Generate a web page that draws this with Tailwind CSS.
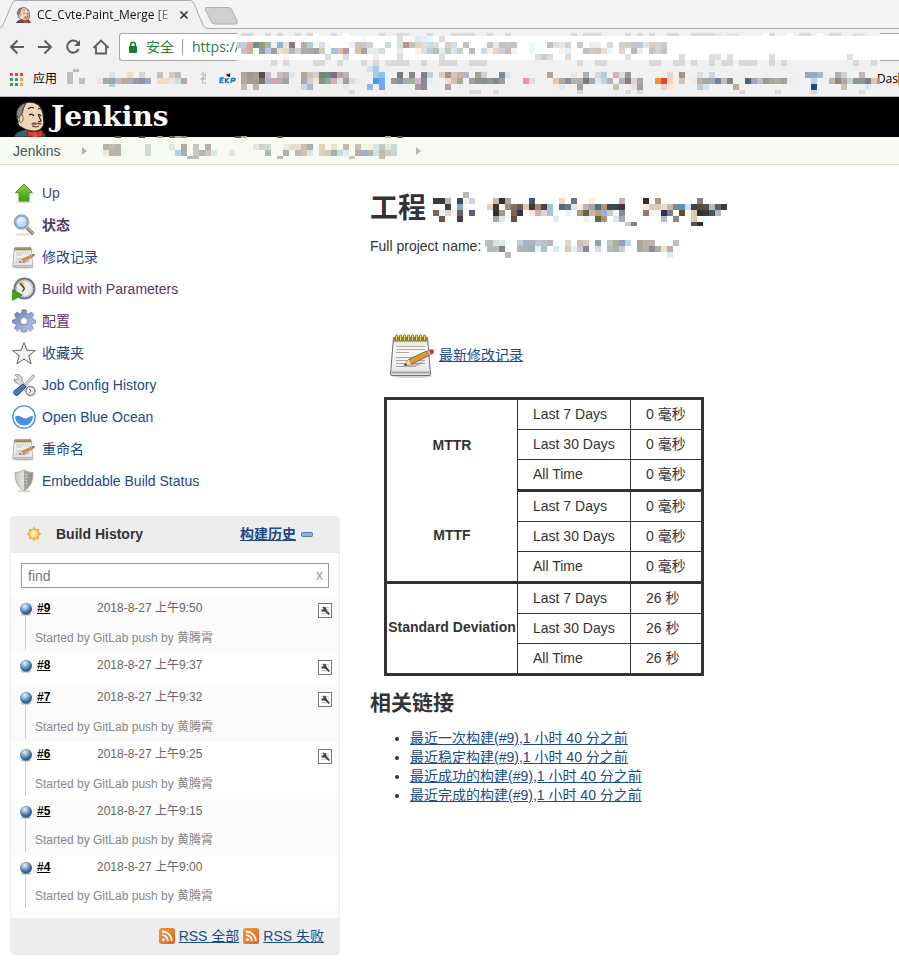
<!DOCTYPE html>
<html lang="zh-CN">
<head>
<meta charset="utf-8">
<title>CC_Cvte.Paint_Merge [Jenkins]</title>
<script src="https://cdn.jsdelivr.net/npm/@tailwindcss/browser@4"></script>
</head>
<body class="bg-white font-['Liberation_Sans','Noto_Sans_CJK_SC',sans-serif] text-sm text-[#333]">

<!-- Shared icon symbols -->
<svg class="absolute size-0" aria-hidden="true">
  <defs>
    <linearGradient id="gPaper" x1="0" y1="0" x2="0" y2="1"><stop offset="0" stop-color="#d8d8d6"/><stop offset=".3" stop-color="#fafafa"/><stop offset="1" stop-color="#e4e4e4"/></linearGradient>
    <linearGradient id="gGreen" x1="0" y1="0" x2="0" y2="1"><stop offset="0" stop-color="#8fd44c"/><stop offset="1" stop-color="#3f9a12"/></linearGradient>
    <linearGradient id="gGear" x1="0" y1="0" x2="1" y2="1"><stop offset="0" stop-color="#5f7fb0"/><stop offset=".5" stop-color="#93a5cc"/><stop offset="1" stop-color="#c3cce6"/></linearGradient>
    <linearGradient id="gShield" x1="0" y1="0" x2="1" y2="0"><stop offset="0" stop-color="#c9c9c5"/><stop offset=".5" stop-color="#e2e2df"/><stop offset=".51" stop-color="#a9a9a5"/><stop offset="1" stop-color="#8b8b87"/></linearGradient>
    <linearGradient id="gRss" x1="0" y1="0" x2="1" y2="1"><stop offset="0" stop-color="#f39a45"/><stop offset="1" stop-color="#dd6320"/></linearGradient>
    <radialGradient id="gBall" cx=".4" cy=".3" r=".65"><stop offset="0" stop-color="#e9f0f0"/><stop offset=".35" stop-color="#a4bcd0"/><stop offset=".75" stop-color="#4077ae"/><stop offset="1" stop-color="#2a568c"/></radialGradient>
    <radialGradient id="gSun" cx=".45" cy=".4" r=".6"><stop offset="0" stop-color="#fffbc0"/><stop offset="1" stop-color="#fbd060"/></radialGradient>
    <radialGradient id="gLens" cx=".4" cy=".3" r=".7"><stop offset="0" stop-color="#eef6fd"/><stop offset="1" stop-color="#a9cbec"/></radialGradient>
    <symbol id="notepad" viewBox="0 0 48 48">
      <ellipse cx="23" cy="45" rx="20" ry="2" fill="#000" opacity=".18"/>
      <path d="M4.500 6.500h34l3 36.500q0 1.500-1.500 1.500H3q-1.500 0-1.500-1.500z" fill="url(#gPaper)" stroke="#6f706d"/>
      <path d="M5 6.500h33l.4 4H4.600z" fill="#85857c"/>
      <path d="M2.500 41.500h38" stroke="#a0a4a0" stroke-width="2"/>
      <path d="M7 15.500h29M7 18.500h29M7 21.500h13M7 26.500h29M7 29.500h29M7 32.500h29M7 35.500h20" stroke="#a9a9a7"/>
      <g fill="#f0d84a" stroke="#7d6910" stroke-width=".9"><rect x="6.500" y="4" width="2.200" height="6" rx="1"/><rect x="10.500" y="4" width="2.200" height="6" rx="1"/><rect x="14.500" y="4" width="2.200" height="6" rx="1"/><rect x="18.500" y="4" width="2.200" height="6" rx="1"/><rect x="22.500" y="4" width="2.200" height="6" rx="1"/><rect x="26.500" y="4" width="2.200" height="6" rx="1"/><rect x="30.500" y="4" width="2.200" height="6" rx="1"/><rect x="34.500" y="4" width="2.200" height="6" rx="1"/></g>
      <path d="M15 35l21-5-7 5z" fill="#777" opacity=".4"/>
      <path d="M15 34.500l4.500-6 18-8.500 2.500 4.500-18 9z" fill="#d99a3c" stroke="#7b4a12" stroke-width=".8"/>
      <path d="M15 34.500l4.500-6 2.500 5z" fill="#f2dcb4"/><path d="M15 34.500l2-2.600 1 2z" fill="#222"/>
      <path d="M37.500 20l2.500-1.200 2.500 4.500L40 24.500z" fill="#bbb" stroke="#777" stroke-width=".5"/>
      <path d="M40 18.700q5-1.500 5 1.500t-3 3.200z" fill="#e02c2c"/>
    </symbol>
    <symbol id="jenkins" viewBox="0 0 34 36">
      <path d="M1 36q1-5 10-7l14 0q7 2 8 7z" fill="#3d6173" stroke="#1c2c35"/>
      <path d="M12 28l6 8 6-8z" fill="#f4f0ea"/>
      <path d="M8 26q-4-2-3-6-2-3-1-9Q6 2 16 1q12 0 14 11l1 10q-1 7-8 8-8 1-15-4z" fill="#efd6b9" stroke="#231f20" stroke-width="1.200"/>
      <path d="M4 16q-2-6 3-11 3-3 6-3-3 5-4 11l-1 6q-3-4-4-3z" fill="#8d8583" stroke="#231f20" stroke-width=".8"/>
      <path d="M7 14q4-1 3 5l-2 3q-3-2-1-8z" fill="#efd6b9" stroke="#231f20" stroke-width=".6"/>
      <path d="M15 8q3-3 6-1M25 8q2-1 3 0M16 14q3-2 5 1M25 14q2-1 3 1M25 13l3 7-3 1" fill="none" stroke="#231f20" stroke-width="1.100"/>
      <path d="M18 23q3-3 6-1 4-1 5 1-3 1-5 0-3 2-6 0z" fill="#6d5a50"/><path d="M19 25q4 2 7 0" fill="none" stroke="#5b2020"/>
      <path d="M15 29l7 3v4l-7 0q-2-4 0-7zM29 29l-7 3v4h7q2-4 0-7z" fill="#d33833" stroke="#5b1715" stroke-width=".8"/><rect x="20" y="31" width="4" height="5" fill="#e8433d"/>
    </symbol>
    <symbol id="ball" viewBox="0 0 14 14"><ellipse cx="7" cy="12.500" rx="5" ry="1.200" fill="#000" opacity=".25"/><circle cx="7" cy="6.700" r="6" fill="url(#gBall)"/></symbol>
    <symbol id="rss" viewBox="0 0 16 16"><rect width="16" height="16" rx="2.500" fill="url(#gRss)"/><circle cx="4.500" cy="11.700" r="1.500" fill="#fff"/><path d="M3 7.200a6 6 0 0 1 6 6M3 3.500a9.700 9.700 0 0 1 9.800 9.700" fill="none" stroke="#fff" stroke-width="1.800"/></symbol>
    <symbol id="console" viewBox="0 0 14 15"><rect x=".5" y=".5" width="13" height="14" fill="#fff" stroke="#777"/><path d="M3 4.500h8M3 6.500h8M3 8.500h8M3 10.500h8" stroke="#ccc"/><path d="M5 3.500l3 1 .5 2.500 3.500 4-1.500 1L7 8.500H4.500L3 7l2.500-.5z" fill="#444"/></symbol>
  </defs>
</svg>

<div class="relative overflow-hidden">
  <!-- Browser tab strip -->
  <div class="relative h-[29px] bg-[#f4f4f4]">
    <svg class="absolute inset-0 h-[29px] w-full" aria-hidden="true">
      <path d="M206 28.500H2000" stroke="#aaa"/>
      <path d="M-1 28.500Q2 28 3 25L12 3.500Q13 .500 16 .500H190Q193 .500 194 3.500L203 25Q204 28.500 208 28.500V30H-1z" fill="#f1f1f1"/>
      <path d="M-1 28.500Q2 28 3 25L12 3.500Q13 .500 16 .500H190Q193 .500 194 3.500L203 25Q204 28.500 208 28.500" fill="none" stroke="#aaa"/>
      <path d="M207 7.500H228Q231 7.500 232 10L237 21Q238 24 236 24H215Q212 24 211 21L205.500 10Q204.500 7.500 207 7.500z" fill="#cfcfcf" stroke="#b0b0b0"/>
    </svg>
    <div class="relative flex h-full items-center pl-4">
      <svg class="h-4 w-[15px] shrink-0" aria-hidden="true"><use href="#jenkins"/></svg>
      <div class="ml-[6px] w-[136px] whitespace-nowrap bg-linear-to-r from-[#111] from-85% to-[#ccc] bg-clip-text font-['Open_Sans',sans-serif] text-xs text-transparent">CC_Cvte.Paint_Merge [E</div>
      <button class="ml-[6px] size-[10px]" aria-label="Close tab"><svg viewBox="0 0 10 10" class="size-[10px]"><path d="M1.500 1.500l7 7M8.500 1.500l-7 7" stroke="#333" stroke-width="1.700"/></svg></button>
    </div>
  </div>
  <!-- Toolbar -->
  <div class="flex h-[36px] items-center bg-[#f1f1f1] pl-2">
    <div class="flex shrink-0 gap-2 text-[#5a5d61]">
      <button aria-label="Back"><svg class="size-5" viewBox="0 0 20 20" fill="none" stroke="currentColor" stroke-width="2"><path d="M16 10H3M9.500 3.500L3 10l6.500 6.500"/></svg></button>
      <button aria-label="Forward"><svg class="size-5" viewBox="0 0 20 20" fill="none" stroke="currentColor" stroke-width="2"><path d="M2 10h13M8.500 3.500L15 10l-6.500 6.500"/></svg></button>
      <button aria-label="Reload"><svg class="size-5" viewBox="0 0 20 20" fill="none" stroke="currentColor" stroke-width="2"><path d="M14 6A6 6 0 1 0 14.700 12"/><path d="M16 3v6h-6z" fill="currentColor" stroke="none"/></svg></button>
      <button aria-label="Home"><svg class="size-5" viewBox="0 0 20 20" fill="none" stroke="currentColor" stroke-width="1.800"><path d="M1.500 11L9 3.500l7.500 7.500M4 9.500v7h10v-7"/></svg></button>
    </div>
    <div class="ml-[7px] flex h-7 flex-1 items-center rounded-l-[3px] border border-r-0 border-[#a6a6a6] bg-white pl-[9px] text-[#2b7d3c]">
      <svg class="h-[13px] w-2" viewBox="0 0 8 13" aria-hidden="true"><rect y="5" width="8" height="7" rx="1" fill="#1b7b36"/><path d="M1.700 6V3.500a2.300 2.300 0 0 1 4.600 0V6" fill="none" stroke="#1b7b36" stroke-width="1.500"/></svg>
      <label for="url" class="ml-[9px]">安全</label>
      <span class="ml-2 h-4 w-px bg-[#999]"></span>
      <input id="url" value="https://" class="ml-[9px] min-w-0 flex-1 bg-transparent font-['Open_Sans',sans-serif] text-sm outline-none">
    </div>
  </div>
  <!-- Bookmarks bar -->
  <div class="flex h-8 items-center border-b border-[#b4b4b4] bg-[#f1f1f1] pb-[3px] pl-[10px] text-xs text-black">
    <svg class="size-[13px] shrink-0" viewBox="0 0 13 13" aria-hidden="true"><g fill="#e8453c"><path d="M0 0h3v3H0zM5 0h3v3H5zM10 0h3v3h-3z"/></g><path d="M0 5h3v3H0zM0 10h3v3H0zM5 10h3v3H5z" fill="#35a05a"/><path d="M5 5h3v3H5z" fill="#3f8ae8"/><path d="M10 5h3v3h-3zM10 10h3v3h-3z" fill="#f4a52a"/></svg>
    <a href="#" class="ml-[10px] whitespace-nowrap">应用</a>
    <a href="#" class="ml-[143px] w-[6px] overflow-hidden whitespace-nowrap text-[#aaa]">视</a>
    <svg class="ml-[13px] h-[12px] w-[17px] shrink-0" viewBox="0 0 17 12" aria-hidden="true" fill="none" stroke="#1c79b0" stroke-width="1.500"><path d="M5 5H1.500L1 9.500h3.500M1 7h3M6.500 5v5M10 5L7 7.500l3 2.500M12 10l.8-4.500q3.500-.5 3.200 1t-3.500 1.500"/><path d="M8 1l1 2M10.500 .500L10 4" stroke="#223" stroke-width="1.700"/></svg>
    <a href="#" class="ml-auto shrink-0 font-['Open_Sans',sans-serif]">Das</a><span class="h-3 w-px bg-[#c07818]"></span>
  </div>
  <!-- Jenkins header -->
  <header class="flex h-10 items-center bg-black pl-[13px]">
    <a href="#" class="flex h-full items-center gap-1 text-white">
      <svg class="mt-1 h-9 w-[34px]" viewBox="0 0 34 36" aria-hidden="true"><use href="#jenkins"/></svg>
      <span class="font-['DejaVu_Serif',serif] text-[28px] leading-10 font-bold">Jenkins</span>
    </a>
  </header>
  <nav class="flex h-7 items-center border-b border-[#d3d7cf] bg-[#f6faf2] pl-[13px] text-[#4d545d]">
    <a href="#">Jenkins</a>
    <svg class="ml-[22px] h-2 w-[5px]" viewBox="0 0 5 8" aria-hidden="true"><path d="M0 0l5 4-5 4z" fill="#b5b5b5"/></svg>
    <svg class="ml-[329px] h-2 w-[5px]" viewBox="0 0 5 8" aria-hidden="true"><path d="M0 0l5 4-5 4z" fill="#b5b5b5"/></svg>
  </nav>
  <!-- Redacted address, bookmarks and breadcrumb -->
  <svg class="pointer-events-none absolute top-0 left-0 h-[165px] w-[880px]" viewBox="0 0 880 165" shape-rendering="crispEdges" aria-hidden="true" data-mosaic="top">
    <rect x="237" y="33" width="643" height="33" fill="#f1f1f1"/><rect x="237" y="36" width="643" height="24" fill="#fff"/>
  </svg>
</div>

<div class="flex items-start">
  <!-- Side panel -->
  <aside class="ml-[10px] w-[330px] shrink-0 pt-3">
    <ul class="leading-8">
      <li class="flex h-8 items-center gap-[6px] pl-[2px]"><svg class="size-6" viewBox="0 0 24 24" aria-hidden="true"><ellipse cx="12" cy="21" rx="8" ry="1.500" fill="#000" opacity=".15"/><path d="M12 3l8.500 8.500H17V20H7v-8.500H3.500z" fill="url(#gGreen)" stroke="#4b9a20"/></svg><a href="#" class="text-[#4a3f7a]">Up</a></li>
      <li class="flex h-8 items-center gap-[6px] pl-[2px]"><svg class="size-6" viewBox="0 0 24 24" aria-hidden="true"><ellipse cx="12" cy="21.500" rx="9" ry="1.500" fill="#000" opacity=".12"/><path d="M15 15l6.500 6" stroke="#777" stroke-width="3.500"/><path d="M15.500 15l6 5.500" stroke="#bbb" stroke-width="1.500"/><circle cx="9.500" cy="9" r="7" fill="url(#gLens)" stroke="#9ea6b0" stroke-width="1.600"/><circle cx="9.500" cy="9" r="5.800" fill="none" stroke="#6f9bd0"/></svg><a href="#" class="font-bold text-[#5c3566]">状态</a></li>
      <li class="flex h-8 items-center gap-[6px] pl-[2px]"><svg class="size-6" aria-hidden="true"><use href="#notepad"/></svg><a href="#" class="text-[#204a87]">修改记录</a></li>
      <li class="flex h-8 items-center gap-[6px] pl-[2px]"><svg class="size-6" viewBox="0 0 24 24" aria-hidden="true"><circle cx="12.500" cy="11.500" r="10" fill="#ececea" stroke="#72758c" stroke-width="2"/><circle cx="12.500" cy="11.500" r="8.200" fill="none" stroke="#b9bac8"/><path d="M12.500 11.500L6.500 6q2.500-2.500 5-2.700z" fill="#ecd04e"/><path d="M12.500 11.500L8 6M12.500 11.500l-2 3" stroke="#333" stroke-width="1.300"/><path d="M.500 12.500l10 5.500-10 5.500z" fill="#43a51c" stroke="#2f7d10" stroke-width=".6"/></svg><a href="#" class="text-[#5c3566]">Build with Parameters</a></li>
      <li class="flex h-8 items-center gap-[6px] pl-[2px]"><svg class="size-6" viewBox="0 0 24 24" aria-hidden="true"><ellipse cx="12" cy="22" rx="8" ry="1.500" fill="#000" opacity=".15"/><path fill-rule="evenodd" d="M10 .800h4l.6 3.200 2 .9L19.400 3l2.400 2.500-1.700 2.900.8 2L23.500 11v3l-2.900.6-.9 2 1.700 2.700-2.300 2.300-2.700-1.800-2 .9L13.800 23h-3.600l-.7-2.500-2-.8-2.700 1.800-2.300-2.300 1.700-2.700-.9-2L.500 14v-3l2.800-.6.8-2L2.500 5.500 5 3l2.600 1.900 2-.9zM12 8.500a3.600 3.600 0 1 0 0 7.200 3.600 3.600 0 0 0 0-7.200z" fill="url(#gGear)" stroke="#6677a4" stroke-width=".7"/></svg><a href="#" class="text-[#5c3566]">配置</a></li>
      <li class="flex h-8 items-center gap-[6px] pl-[2px]"><svg class="size-6" viewBox="0 0 24 24" aria-hidden="true"><path d="M12 1.500l3 7.800 8.300.3-6.500 5.100 2.300 8-7.100-4.600-7.100 4.600 2.300-8L.700 9.600 9 9.300z" fill="#f2f2f2" stroke="#666" stroke-linejoin="round"/></svg><a href="#" class="text-[#204a87]">收藏夹</a></li>
      <li class="flex h-8 items-center gap-[6px] pl-[2px]"><svg class="size-6" viewBox="0 0 24 24" aria-hidden="true"><path d="M3 2l3 3-1 2-3-1q0 4 4 4.500L17 22l3-2L10 8q1-5-4-6.500z" fill="#d9dad8" stroke="#85878a" stroke-width=".8"/><path d="M22 2l-1-.5-8 9 1.500 1.500L22.500 4z" fill="#ccd6e4" stroke="#7a8ba5" stroke-width=".7"/><path d="M11 11l3 3-8 8q-2 1-3.500-.5T2 18z" fill="#4c78b4" stroke="#274f88"/><circle cx="18.500" cy="18" r="4.500" fill="#f0e9ee" stroke="#8e84a8" stroke-width="1.400"/><path d="M17 16l2 2-1.500 2" fill="none" stroke="#665"/></svg><a href="#" class="text-[#204a87]">Job Config History</a></li>
      <li class="flex h-8 items-center gap-[6px] pl-[2px]"><svg class="size-6" viewBox="0 0 24 24" aria-hidden="true"><circle cx="12" cy="12" r="11.200" fill="#fff" stroke="#4a90e2" stroke-width="1.300"/><path d="M3 12q3-2.500 6.500 0t6.500.5q2.500-2 5-1.500A9 9 0 0 1 3 12z" fill="#4a90e2"/></svg><a href="#" class="text-[#204a87]">Open Blue Ocean</a></li>
      <li class="flex h-8 items-center gap-[6px] pl-[2px]"><svg class="size-6" aria-hidden="true"><use href="#notepad"/></svg><a href="#" class="text-[#204a87]">重命名</a></li>
      <li class="flex h-8 items-center gap-[6px] pl-[2px]"><svg class="size-6" viewBox="0 0 24 24" aria-hidden="true"><ellipse cx="12" cy="22" rx="7" ry="1.300" fill="#000" opacity=".15"/><path d="M12 1q4 2.500 9 2.500.5 13-9 18.500-9.500-5.500-9-18.500Q8 3.500 12 1z" fill="url(#gShield)" stroke="#a4a4a0" stroke-width=".8"/><path d="M9.500 5v12M14.500 5v12" stroke="#fff" stroke-dasharray="1 2" opacity=".8"/></svg><a href="#" class="text-[#204a87]">Embeddable Build Status</a></li>
    </ul>

    <section class="mt-[19px] overflow-hidden rounded-[4px] border border-[#ededed]">
      <div class="flex h-9 items-center bg-[#ededed] pr-[26px] pb-[2px] pl-[15px] font-bold">
        <svg class="size-4" viewBox="0 0 16 16" aria-hidden="true"><path d="M8 .500l1.700 2.800L13 2.800 12.700 6l2.800 2-2.800 2 .3 3.200-3.300-.5L8 15.500l-1.700-2.800L3 13.200 3.300 10 .500 8l2.800-2L3 2.800l3.300.5z" fill="#f8a646"/><circle cx="8" cy="8" r="4.600" fill="url(#gSun)" stroke="#eda531" stroke-width=".7"/></svg>
        <h2 class="ml-[14px]">Build History</h2>
        <a href="#" class="ml-auto text-[#204a87] underline">构建历史</a>
        <button class="ml-[5px]" aria-label="Collapse"><svg class="h-[5px] w-3" viewBox="0 0 12 5"><rect x=".5" y=".5" width="11" height="4" rx="1" fill="#8fb3dc" stroke="#4a7ab0"/></svg></button>
      </div>
      <div class="relative px-[10px] pt-[10px] pb-2">
        <input id="find" aria-label="find" placeholder="find" class="block h-[25px] w-full border border-[#999] bg-white px-[6px] text-sm outline-none placeholder:text-[#777]">
        <button class="absolute top-[13px] right-4 leading-[19px] text-[#999]" aria-label="Clear">x</button>
      </div>
      <ol class="text-xs leading-4 text-[#666]" id="builds"></ol>
      <div class="h-[7px] bg-[#fbfbfb]"></div>
      <div class="flex h-9 items-center justify-end gap-[3px] bg-[#ededed] pr-[15px] text-[#204a87]">
        <svg class="size-4" aria-hidden="true"><use href="#rss"/></svg><a href="#" class="mx-px underline">RSS 全部</a>
        <svg class="size-4" aria-hidden="true"><use href="#rss"/></svg><a href="#" class="ml-px underline">RSS 失败</a>
      </div>
    </section>
  </aside>

  <!-- Main panel -->
  <main class="ml-[30px] min-w-0 flex-1 pt-[24px]">
    <h1 class="flex h-10 items-center text-[28px] leading-10 font-bold">工程
      <svg class="ml-[7px] h-[34px] w-[296px]" viewBox="433 192 296 34" shape-rendering="crispEdges" aria-hidden="true" data-mosaic="title"></svg>
    </h1>
    <div class="mt-2 flex h-[18px] items-start leading-[18px]">Full project name:
      <svg class="mt-[3px] ml-[4px] h-[18px] w-[194px]" viewBox="485 240 194 18" shape-rendering="crispEdges" aria-hidden="true" data-mosaic="name"></svg>
    </div>
    <div class="mt-[76px] flex h-12 items-center gap-[2px] pl-[19px]">
      <svg class="size-12" aria-hidden="true"><use href="#notepad"/></svg>
      <a href="#" class="text-[#204a87] underline">最新修改记录</a>
    </div>
    <table class="mt-[18px] ml-[14px] border-separate border-spacing-0 border-3 border-b-0 border-[#333] leading-5">
      <tbody id="stats"></tbody>
    </table>
    <h2 class="mt-3 text-[21px] leading-[30px] font-bold">相关链接</h2>
    <ul class="mt-[11px] list-disc pl-10 leading-[19px]">
      <li><a href="#" class="text-[#204a87] underline">最近一次构建(#9),1 小时 40 分之前</a></li>
      <li><a href="#" class="text-[#204a87] underline">最近稳定构建(#9),1 小时 40 分之前</a></li>
      <li><a href="#" class="text-[#204a87] underline">最近成功的构建(#9),1 小时 40 分之前</a></li>
      <li><a href="#" class="text-[#204a87] underline">最近完成的构建(#9),1 小时 40 分之前</a></li>
    </ul>
  </main>
</div>

<script>
// Builds: number, time, has a cause line, has a console button
const builds = [[9,'9:50',1,1],[8,'9:37',0,1],[7,'9:32',1,1],[6,'9:25',1,1],[5,'9:15',1,0],[4,'9:00',1,0]];
document.getElementById('builds').innerHTML = builds.map(([n,t,cause,btn]) => `
  <li class="relative pl-2 pr-[7px] ${n % 2 ? 'bg-[#fbfbfb]' : 'bg-white'} ${!cause ? 'h-8' : btn ? 'h-[57px]' : 'h-14'}">
    ${cause ? '<span class="absolute top-5 bottom-[3px] left-[14px] w-px bg-[#ccc]"></span>' : ''}
    <div class="flex pt-1">
      <svg class="relative mt-[2px] size-[14px]" aria-hidden="true"><use href="#ball"/></svg>
      <a href="#" class="ml-1 w-[60px] font-bold text-black underline">#${n}</a>
      <span>2018-8-27 上午${t}</span>
      ${btn ? '<button class="ml-auto mt-[3px]" aria-label="Console"><svg class="h-[15px] w-[14px]"><use href="#console"/></svg></button>' : ''}
    </div>
    ${cause ? `<p class="absolute ${btn ? 'top-[34px]' : 'top-[33px]'} left-6 text-[#888]">Started by GitLab push by 黄腾霄</p>` : ''}
  </li>`).join('');

const stats = [['MTTR','0 毫秒'],['MTTF','0 毫秒'],['Standard Deviation','26 秒']];
document.getElementById('stats').innerHTML = stats.map(([name,value],g) =>
  ['Last 7 Days','Last 30 Days','All Time'].map((p,i) => `<tr>
    ${i ? '' : `<th rowspan="3" class="w-[131px] border-r border-[#333] pb-[3px] whitespace-nowrap ${g ? 'border-b-3' : ''}">${name}</th>`}
    <td class="${i < 2 ? 'h-[30px] border-b' : 'h-8 border-b-3'} w-[113px] border-r border-[#333] pb-[2px] pl-[15px] whitespace-nowrap">${p}</td>
    <td class="${i < 2 ? 'border-b' : 'border-b-3'} w-[70px] border-[#333] pb-[2px] pl-[15px] whitespace-nowrap">${value}</td></tr>`).join('')).join('');

// Redaction mosaics: "y,x,height: colours", 6px cells, "-" skips a cell
const D='d9d9d9';
const mosaics = {
top: `33,241,3:${D} ${D} - - ${D} - ${D} - - ${D} - ${D} fff - - ${D} - fff - - - - - ${D} - - ${D} ${D} - - - ${D} - - - ${D} ${D} ${D} ${D} - - ${D} - - ${D}
33,571,3:${D} - ${D} ${D} ${D} - - - - ${D} - ${D} - ${D} - - ${D} ${D} - - ${D} ${D} ${D} ${D} e4e4e4 - e4e4e4 e4e4e4 - - - - fff ${D} - - fff - ${D} ${D} - fff - ${D} ${D} - - e0e0e0 e0e0e0
36,361,6:f5faff - - - - - e0e0e0 - f5f5f5 dfeaf5 ececf5 f0f8ff - ddd
42,237,6:c8c8d0
42,241,6:c8ccd4 d8a898 6f8f98 a09678 a8b4ac eee 98b0dc f0e4d0 857a80 - b5b0a0 b8c8d4 f0faea d8dcec f5f9ff - - fffaea eef d0c0b8 ccc8cc d0d4dc - - c8d8e4 - e0dedc b09a90 c4c0bc d8d4cc e4dcd4 c8dce8 e0ddd8 - d8d0c8 d0e0ee - c4c0b8 - - - c4c4c4 f0e8dc bcc4cc c8c8c8 c4c4bc - - eaf8ff - - c0c0c0 dcdcdc e0e8ec d8d4d0 - c8c8d0 - f0eee8 f0f0ea - d8d8e0 - d4d0cc cccfc4 c4c4d4 c0c8d0 e0e4e8 d8cfc8 ccd4dc d0cac6 fcffff
48,241,6:ccbccc d8a898 f8fcff 8c9cb4 c0c8e0 a0a09c e4e4d0 e0d8c0 b0b4c8 d8d0cc a8acb4 a8aca0 a0a4a4 d0ccbc - a0c0dc e0bcac b098a8 - d8c0b0 a0a4a0 e4ecf0 e8e8e4 d4dce8 - - e8ecf4 - - fef0e4 e0e0e0 c8ccd4 b8bcb8 e0ece8 c8c8c0 d8e4f0 c8d0cc - bcbcbc - d0dce8 fcf0e0 e4d4cc c8d0d8 c8b8b0 f8f0f0 - - eaf8ff - - - - fcf4ec e0f0fc - fffff8 b8c4cc d0c8c4 ccc4c4 e8e0d4 ecf4ff - e0d4c8 - b8b8bc f0ecec - c0c4c4 d8d0cc c4c4c4
54,283,6:fff2ec
54,325,6:dcdcdc - - dcdcdc - - - - ededed - - - ddd - - - - - - ddd
54,535,6:dcdcdc ccc dcdcdc - - dcdcdc - - - - - - - - - ddd - - - - - - - - ddd - - - - e0e0e0 e0e0e0 - e0e0e0 - - - - - - ddd - - - - - - - - - - - - e0e0e0
60,271,6:${D} - ${D} - - - - ${D} ${D} - - ${D} - - - ${D} - ${D} - ddd ${D} ${D} ${D} - - ${D} - - ${D} ${D} ${D} - - ${D} ${D} ${D}
60,577,6:${D} - - ${D} ${D} - - - - - - - ${D} ${D} - - ${D} ${D} - ${D} - - ${D} - ${D} ${D} - ${D} ${D} ${D} - - ${D} - ${D}
60,853,6:${D} - - ${D}
69,73,3:bbb
72,67,6:bfbfbf - - - - - - d8e4ec - - f0dcc4 - dcd4cc - - c8bcc0 - d4ccc4 c8b8b4
78,67,6:bfbfbf - bfbfbf - - eee4d8 a4aca4 98a8a8 c8b8bc b8a89c a8acb4 989ca0 8c94a0 98a8c0 - f0dcc8 f0dcc8 e8e4e8 c8e0dc b0a8b4
84,109,3:b8d0e0
72,241,6:b0a8a0 a09890 a8a090 505050 c8bcc4 - c4c0bc b8b4b0 d8e8f4 - b8a890 ccc4c4 d8d0cc 788078 708888 806c88 b0a8a0 b8b8b0
78,241,6:c0a890 a0a090 a8a094 787470 b8b4bc cca4b8 b4b0a8 a0a4a0 - - a0a8c0 d8ccc8 f0e8e0 889080 90a8a4 d0b0b0 e0e4dc a0a0a4 dcdce0 e8ecf0
84,241,6:bbb - c0b0a8 - e8f0f0 - - - - - d0d8e0 b0b4c8 - - f0ece8 - - e4e8ec
90,349,4:${D} - - - - - - - - - - - - - - - - - - - ${D} ${D} - - ${D}
66,367,6:d4deec a8c8f0
72,373,6:a8c8ee 90bcf0
78,373,6:4898fc 74acf0
84,367,6:8cbcf8 - 74a8ec
72,397,6:78787c - 888888 - 808084 c0d4d8 - e0ccc0 a09894 d8c4b4 c8b0b0 b4b8c4 - a8a090 d0d0d4 - - 808890 d8e4ec
78,391,6:98989c 8090a0 a0b0b4 a8aca0 c8bcc8 8c8898 e0f0f0 - - f0dcd0 d8bcac a4ac98 - 98a0a0 88948c 889088 909890 808c80 9c9ca8
84,415,6:a898a4 908898 - - - b0a0a4
72,547,6:b0a0a0 - - - eee8e0 - a8b0b8 - d0d8e4 b8ccd4 - d4b4b0 d8e0d8 90a090 - - - - - - f0d0d0 - a09484 - - d4e0e8 - ccd4e0
78,523,6:e8989c dcdcdc - - - e0c8b4 b0a898 8890a0 b0b4ac b4b0a8 707c84 a0a8a4 dce8f0 c4d0dc b0b4c0 - b8b0b4 907880 dcd4cc a0a8b0 - - fc8c34 e04830 f8d8b0 - c8c4c0 - f0ece4 b4b0a8 a4a4a4 a8a8b4 7080a0 bcbcb8 808884 e8f4f0 - 506470 a0a4b0 c4b8d0 9c9c8c a8a894 b4a8b0 a8a090 f0e8e4
84,559,6:dde8f4 - - a0a0a0 - - - - - ccc0b4 - - e8e0d8 a0a0a0 - - - f0d0c0 fce4d8 - - - - c0ccd4 d0e4f0 - - - - b8aca0
90,577,4:${D} - - - - - - - ${D} - ${D}
90,739,4:${D} - - - - - ${D} - - - - - ${D} - - - - - - - ${D}
72,805,6:98acc0 98acc0 a8b8cc - - a8b4bc d8ccd4 - - c8b0b8
78,811,6:c4d0dc - - b8b8ac 988478 a8a8a8 c8d0d4 90989c 889898 808088 e0c8b4 a8a0a0
84,811,6:204c78 - - - - ccc0b8 - - - dce8f0
136,115,2:555 - - - 444 - - 999 - 666 aaa 888 - - - - - - - - 555 aaa - - - - - 555 - - - - - - - - - - - - - - - - - aaa - 555
144,103,6:b8b4a8 c0bcb4 b8b4b0 - - - - d0d8d4 - - - dce8e4 - b0aca8 - c8c4bc - b8b0a8 - - - - - - - e8e8d8 c8d4d4 d0dccc - - f0e8d8 dee0d0 ecdcd4 c8c0b0 b0b0a8 - e0d0b4 - ece4cc - c8b8a0 - c8c0b4 f0f8e8 f0f0e4 d8e4e4 c4c8c0 e4e8d8 ccd8d8
150,103,6:f0e8d8 b8b4ac b8b4b0 eaf8f0 - - - d0d8d4 - - - - b8d0dc a0b0c0 - c8c8bc b8b4b0 c8c4c0 dce8e4 - - e4e8e0 - - - - - b0b8b4 - - b0b0ac - b8bcb8 d0c4a8 d4e8f0 - dcd0c0 d0ccb8 acb0a0 c0dce4 d8f0f4 - b0b0a8 a0b0bc b0b4b0 d4e0e0 b8bcb4 d0c8b8 ccd4dc
156,187,3:bbb bbb - - - - - - - - - - - - - bbb - - - - - - - - - - - ccc8bc - - - - c8bcac`,
title: `192,463,6:b8b8b8
198,433,6:403838 403838 b0bcc8 - 404850 f8f0e8 c8d8ec - - - c8b8a8 303030 b0aca8 - - - 385878 - - - - f0dcbc - 707478 - - fcecdc - - - - b8b8c0 - - - 303030 - a89888 - - - - - - 808084
204,445,6:404040 - 88a8bc fff8f0 fff8f0 - - e4d0c0 403830 fff8f0 a08c7c 887060 705848 dcc8b8 403838 a08878 484040 a8c0d8 - 506878 707474 d8e4f0 ffecd0 b8b8bc a0a89c 506c88 a89878 404850 304860 503030 - - - f8ece4 dcc8b8 e0ccb4 e8dccc c8b8a0 708ca0 6090a8 c8e0fc 484038 504c44 505050 b8b8b8 606068 483838
210,433,6:806450 e8f0fc e0d4c8 fff0e0 586470 fff8f0 506088 - - - 303030 a09890 - 806450 303858 - fce8d0 d8b0a8 e0d8d0 a0c4e0 - - e0f4ff - a89880 706048 c8b8a8 b0a088 a0b0d4 c8c8c8 fff4e0 7890a8 - - - 987868 e8f8f0 - 303058 708090 fffce8 605030 - d8c8b0 303030 403830 485868 b8b8b8
216,439,6:685848 - - 484040 - - - - - a8a8a8 e0e8e8 - 685040 - - - - - - d8ecff - - - - f0f0f0 - 706048 a89878 - d0e8ff b0a8a4 - - - - - - b0b8dc - 888890 - - dccab8 - ecffff
222,625,4:c8c8c8 808080 - - - - - - - - - 505050 303030`,
name: `240,485,6:bbb
240,487,6:bbb d8e0e4 dce8f0 - - c0ccd8 a8b4c4 b0b0cc c4c0cc b8c8c8 b8b4b8 - - e0d4cc - d0bcb0 d4ccc8 - 90a4b0 - c0c4bc b0aca0 90a4b0 b8d8f0 - b0a098 b8b0ac b8b4b0 - - - b8bcd4
246,487,6:b8bcb8 b8bcb8 888474 - - b8b4b4 b0b4b4 a8acb4 dcf4ff b4c0bc - d8e8fc - d0ccc4 e8f0ec c0cce4 948490 - cce0f0 - b8b8b8 a8b4a8 d0c8cc - - a8a8a4 bcb0a8 948490 a8b4a8 f4e0c8 b0b4ac
252,505,6:bbb
252,667,6:d8ecfc`};
document.querySelectorAll('[data-mosaic]').forEach(svg => {
  svg.innerHTML += mosaics[svg.dataset.mosaic].split('\n').map(line => {
    const [pos, cells] = line.split(':'), [y, x, h] = pos.split(',').map(Number);
    return cells.split(' ').map((c,i) => c === '-' ? '' : `<rect x="${x + i*6}" y="${y}" width="6" height="${h}" fill="#${c}"/>`).join('');
  }).join('');
});
</script>
</body>
</html>
